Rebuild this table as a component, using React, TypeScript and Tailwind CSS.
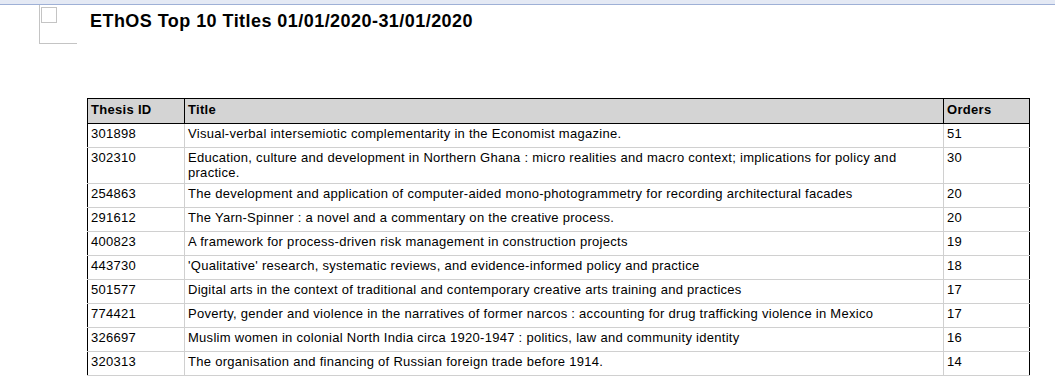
const rows = [
  { id: "301898", title: "Visual-verbal intersemiotic complementarity in the Economist magazine.", orders: 51 },
  {
    id: "302310",
    title:
      "Education, culture and development in Northern Ghana : micro realities and macro context; implications for policy and practice.",
    orders: 30,
  },
  {
    id: "254863",
    title: "The development and application of computer-aided mono-photogrammetry for recording architectural facades",
    orders: 20,
  },
  { id: "291612", title: "The Yarn-Spinner : a novel and a commentary on the creative process.", orders: 20 },
  { id: "400823", title: "A framework for process-driven risk management in construction projects", orders: 19 },
  {
    id: "443730",
    title: "'Qualitative' research, systematic reviews, and evidence-informed policy and practice",
    orders: 18,
  },
  {
    id: "501577",
    title: "Digital arts in the context of traditional and contemporary creative arts training and practices",
    orders: 17,
  },
  {
    id: "774421",
    title: "Poverty, gender and violence in the narratives of former narcos : accounting for drug trafficking violence in Mexico",
    orders: 17,
  },
  {
    id: "326697",
    title: "Muslim women in colonial North India circa 1920-1947 : politics, law and community identity",
    orders: 16,
  },
  { id: "320313", title: "The organisation and financing of Russian foreign trade before 1914.", orders: 14 },
];

export default function App() {
  return (
    <div className="w-[1055px] h-[382px] bg-white overflow-hidden text-black" style={{ fontFamily: '"Liberation Sans", Arial, sans-serif' }}>
      {/* top band */}
      <div className="h-[4px] bg-[#e4e9f4]" />
      <div className="h-px bg-[#9eb0d6]" />

      <div className="flex">
        {/* placeholder frame */}
        <div className="ml-[39px] w-[38px] h-[39px] border-l border-b border-[#c4c4c4] pl-[1px] pt-[2px]">
          <div className="w-[16px] h-[16px] border border-[#c4c4c4]" />
        </div>
        <h1 className="ml-[13px] mt-[5px] text-[18px] leading-[22px] font-bold tracking-[0.45px]">
          EThOS Top 10 Titles 01/01/2020-31/01/2020
        </h1>
      </div>

      <table className="ml-[87px] mt-[54px] w-[942px] table-fixed border-collapse border border-black text-[13px] leading-[15px] tracking-[0.28px]">
        <colgroup>
          <col className="w-[97px]" />
          <col className="w-[759px]" />
          <col className="w-[86px]" />
        </colgroup>
        <thead>
          <tr className="bg-[#d4d4d4] h-[25px]">
            <th className="border border-black text-left font-bold px-[3px] pt-[2px] pb-[6px] tracking-[0.3px]">Thesis ID</th>
            <th className="border border-black text-left font-bold px-[3px] pt-[2px] pb-[6px] tracking-[0.3px]">Title</th>
            <th className="border border-black text-left font-bold px-[3px] pt-[2px] pb-[6px] tracking-[0.3px]">Orders</th>
          </tr>
        </thead>
        <tbody>
          {rows.map((r) => (
            <tr key={r.id} className="h-[24px]">
              <td className="border border-[#d0d0d0] border-l-black align-top px-[3px] pt-[2px] pb-[3px]">{r.id}</td>
              <td className="border border-[#d0d0d0] align-top px-[3px] pt-[2px] pb-[3px]">{r.title}</td>
              <td className="border border-[#d0d0d0] border-r-black align-top px-[3px] pt-[2px] pb-[3px]">{r.orders}</td>
            </tr>
          ))}
        </tbody>
      </table>
    </div>
  );
}
